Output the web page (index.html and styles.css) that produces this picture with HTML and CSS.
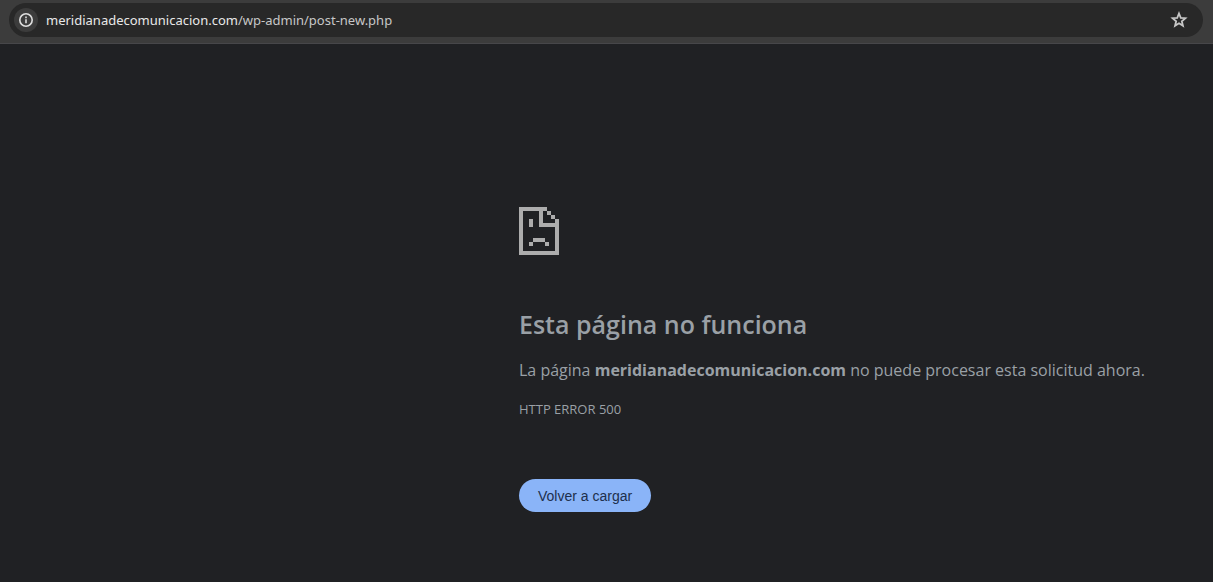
FILE: index.html
```html
<!DOCTYPE html>
<html lang="es">
<head>
<meta charset="utf-8">
<meta name="viewport" content="width=device-width, initial-scale=1">
<title>meridianadecomunicacion.com</title>
<link rel="stylesheet" href="styles.css">
</head>
<body>
<header class="toolbar">
  <div class="omnibox">
    <button class="site-info" type="button" aria-label="Ver información del sitio">
      <svg width="16" height="16" viewBox="0 0 16 16" aria-hidden="true">
        <circle cx="8" cy="8" r="6.2" fill="none" stroke="currentColor" stroke-width="1.6"/>
        <path d="M7.2 7.2h1.6v4H7.2zM7.2 4.6h1.6v1.6H7.2z" fill="currentColor"/>
      </svg>
    </button>
    <div class="url"><span class="host">meridianadecomunicacion.com</span>/wp-admin/post-new.php</div>
    <button class="bookmark" type="button" aria-label="Añadir a marcadores">
      <svg width="18" height="18" viewBox="0 0 18 18" aria-hidden="true">
        <path d="M9 2.5l1.75 4.3 4.65.4-3.55 3.05 1.1 4.55L9 12.35 5.05 14.8l1.1-4.55L2.6 7.2l4.65-.4z" fill="none" stroke="currentColor" stroke-width="1.8"/>
      </svg>
    </button>
  </div>
</header>
<main class="page">
  <div class="error">
    <svg class="sad-page" width="40" height="48" viewBox="0 0 40 48" shape-rendering="crispEdges" aria-hidden="true">
      <path fill="currentColor" d="M0 0h28v4h-4v12h12v-4h4v36H0zM4 4v40h32V20H20V4zM28 4h4v4h-4zM32 8h4v4h-4zM10 12h4v8h-4zM14 31h12v4H14zM10 35h4v4h-4zM26 35h4v4h-4z" fill-rule="evenodd"/>
    </svg>
    <h1 class="title">Esta página no funciona</h1>
    <p class="message">La página <strong>meridianadecomunicacion.com</strong> no puede procesar esta solicitud ahora.</p>
    <p class="code">HTTP ERROR 500</p>
    <button class="reload" type="button">Volver a cargar</button>
  </div>
</main>
</body>
</html>
```
FILE: styles.css
```css
body {
  margin: 0;
  min-height: 100vh;
  display: flex;
  flex-direction: column;
  background: #202124;
  color: #9aa0a6;
  font-family: "Segoe UI", "Open Sans", "Noto Sans", sans-serif;
}

.toolbar {
  padding: 3px 10px 6px 9px;
  background: #3c3c3c;
  border-bottom: 1px solid #47474a;
}

.omnibox {
  display: flex;
  align-items: center;
  height: 34px;
  padding: 0 14px 0 5px;
  border-radius: 17px;
  background: #282828;
}

.site-info,
.bookmark {
  display: flex;
  align-items: center;
  justify-content: center;
  padding: 0;
  border: 0;
  background: none;
  color: #dedede;
}

.site-info {
  width: 24px;
  height: 24px;
  border-radius: 50%;
  background: #3c3c3c;
}

.bookmark {
  width: 20px;
  height: 20px;
  color: #c7c7c7;
}

.url {
  flex: 1;
  margin-left: 8px;
  font-family: "Segoe UI", "Noto Sans", sans-serif;
  font-size: 13px;
  line-height: 20px;
  color: #c7c7c7;
}

.host {
  color: #e8e8e8;
}

.page {
  flex: 1;
  padding: 163px 0 69px 519px;
}

.sad-page {
  display: block;
  color: #adadad;
}

.title {
  margin: 51px 0 0;
  font-size: 25px;
  font-weight: 600;
  line-height: 36px;
}

.message {
  margin: 16px 0 0;
  font-size: 16px;
  line-height: 24px;
}

.code {
  margin: 18px 0 0;
  font-size: 13px;
  line-height: 19px;
}

.reload {
  display: block;
  margin-top: 60px;
  height: 33px;
  padding: 0 19px;
  border: 0;
  border-radius: 17px;
  background: #8ab4f8;
  color: #202f4c;
  font-family: Arial, "Liberation Sans", sans-serif;
  font-size: 14px;
}
```
